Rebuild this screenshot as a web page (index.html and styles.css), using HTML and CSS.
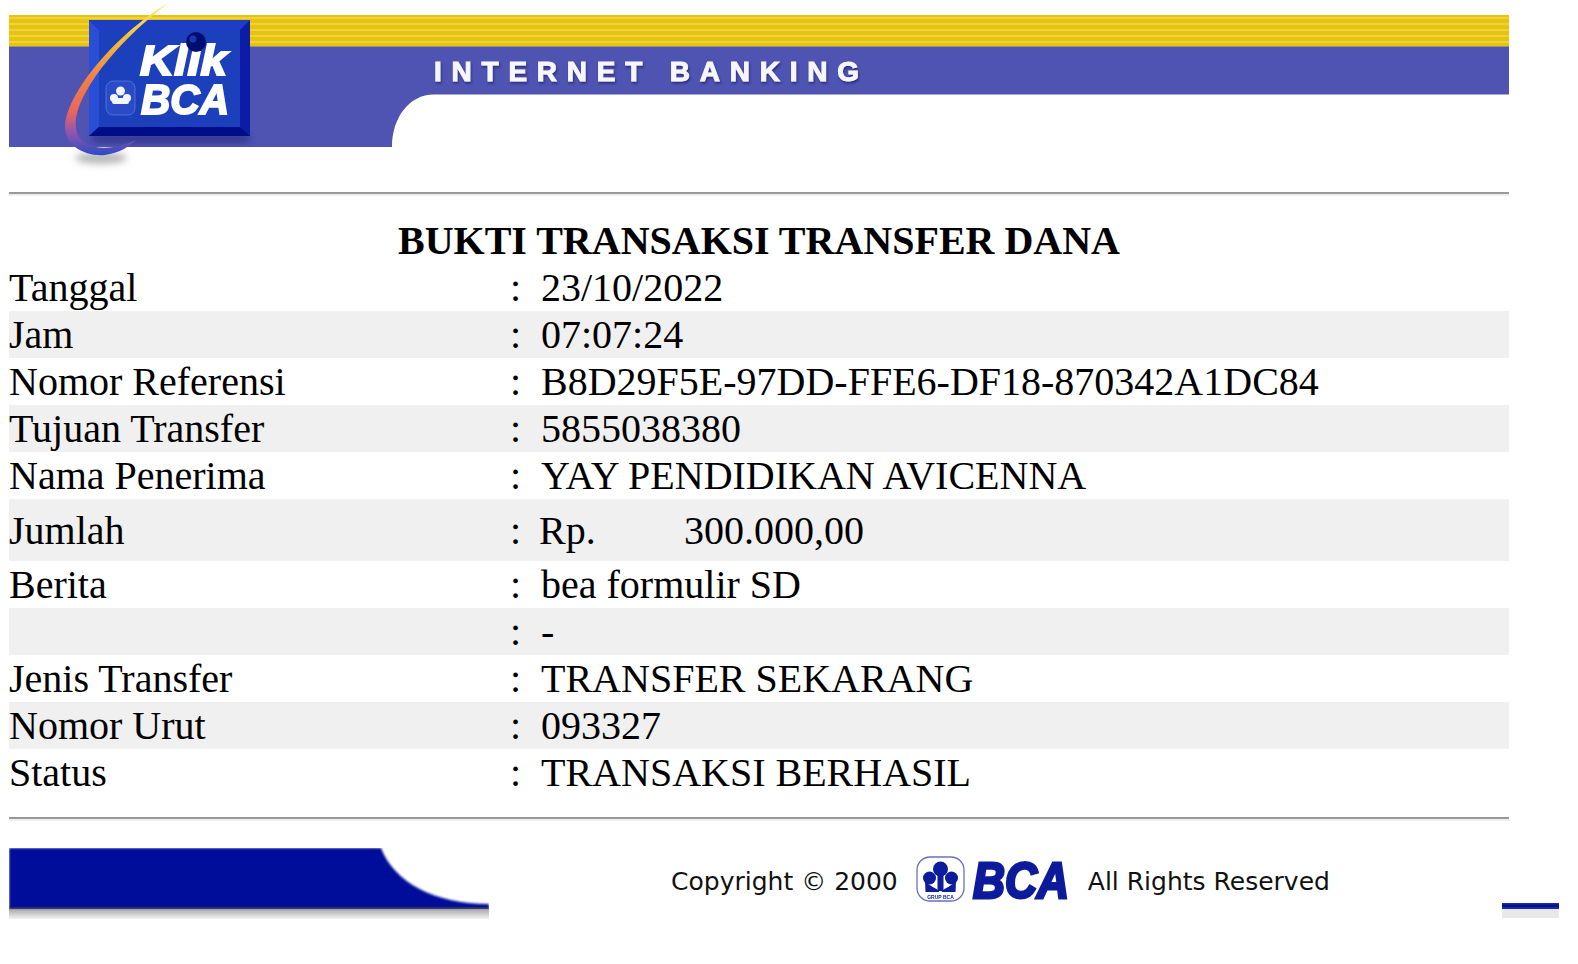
FILE: index.html
```html
<!DOCTYPE html>
<html lang="id">
<head>
<meta charset="utf-8">
<title>Bukti Transaksi Transfer Dana</title>
<link rel="stylesheet" href="styles.css">
</head>
<body>
<main class="page">
  <svg class="banner" viewBox="0 0 1500 170" width="1500" height="170" xmlns="http://www.w3.org/2000/svg" role="img" aria-label="KlikBCA Internet Banking">
    <defs>
      <linearGradient id="swoosh" x1="0" y1="0" x2="0" y2="1">
        <stop offset="0" stop-color="#f8f06a"/>
        <stop offset="0.22" stop-color="#f2c23c"/>
        <stop offset="0.5" stop-color="#f08048"/>
        <stop offset="0.72" stop-color="#e9665c"/>
        <stop offset="0.84" stop-color="#9a55ac"/>
        <stop offset="1" stop-color="#2c4cc4"/>
      </linearGradient>
      <filter id="soft" x="-5%" y="-5%" width="110%" height="110%"><feGaussianBlur stdDeviation="0.6"/></filter>
      <filter id="softer" x="-30%" y="-60%" width="160%" height="220%"><feGaussianBlur stdDeviation="3.5"/></filter>
      <filter id="tshadow" x="-5%" y="-20%" width="110%" height="150%"><feGaussianBlur in="SourceAlpha" stdDeviation="1.2" result="b"/><feOffset in="b" dx="1" dy="2" result="o"/><feFlood flood-color="#20246a" flood-opacity="0.75"/><feComposite in2="o" operator="in" result="s"/><feGaussianBlur in="SourceGraphic" stdDeviation="0.55" result="g"/><feMerge><feMergeNode in="s"/><feMergeNode in="g"/></feMerge></filter>
    </defs>
    <g filter="url(#soft)">
      <rect x="0" y="15" width="1500" height="32" fill="#e6c408"/>
      <g fill="#efd23c">
        <rect x="0" y="17" width="1500" height="2"/>
        <rect x="0" y="23" width="1500" height="2"/>
        <rect x="0" y="29" width="1500" height="2"/>
        <rect x="0" y="35" width="1500" height="2"/>
        <rect x="0" y="41" width="1500" height="2"/>
      </g>
      <rect x="0" y="46" width="1500" height="1" fill="#9c9470"/>
      <path d="M0 47H1500V94.500H425C400 94.500 383 118 383 147H0Z" fill="#4f53b2"/>
      <rect x="84" y="135" width="156" height="7" fill="#2e3088" filter="url(#softer)"/>
      <ellipse cx="92" cy="158" rx="26" ry="6" fill="#b8b8b8" filter="url(#softer)"/>
      <rect x="80" y="20" width="161" height="116" fill="#0a1fa6"/>
      <path d="M80 20H241L231 30H90Z" fill="#1b3cc4"/>
      <path d="M80 20L90 30V127L80 136Z" fill="#2b50d6"/>
      <path d="M80 136L90 127H231L241 136Z" fill="#010a86"/>
      <rect x="90" y="30" width="141" height="97" fill="#1c3fbc"/>
      <path d="M161 2C112 30 60 88 56 125C55 146 77 157 96 155C110 153 120 147 127 140C112 147 97 149 87 147C72 144 65 134 67 118C73 84 116 35 161 2Z" fill="url(#swoosh)"/>
      <text class="logo-word"><tspan x="131" y="75" textLength="87" lengthAdjust="spacingAndGlyphs">Klik</tspan><tspan x="132" y="114" textLength="88" lengthAdjust="spacingAndGlyphs">BCA</tspan></text>
      <circle cx="187" cy="42" r="10" fill="#060f70"/>
      <circle cx="184" cy="39" r="3.500" fill="#1f35b8"/>
      <rect x="97" y="81" width="29" height="34" rx="7" fill="#2a4cc8" stroke="#6f8ae0" stroke-width="0.6"/>
      <g fill="#f2f4ff">
        <circle cx="111.500" cy="91" r="4.500"/>
        <circle cx="105" cy="98" r="4"/>
        <circle cx="118" cy="98" r="4"/>
        <rect x="103" y="98" width="17" height="6" rx="2"/>
      </g>
    </g>
    <text class="banner-title" x="425" y="81" textLength="425" filter="url(#tshadow)">INTERNET BANKING</text>
  </svg>

  <div class="rule rule-top"></div>

  <h1 class="title">BUKTI TRANSAKSI TRANSFER DANA</h1>

  <dl class="rows">
    <div class="row"><dt>Tanggal</dt><dd class="colon">:</dd><dd class="value">23/10/2022</dd></div>
    <div class="row"><dt>Jam</dt><dd class="colon">:</dd><dd class="value">07:07:24</dd></div>
    <div class="row"><dt>Nomor Referensi</dt><dd class="colon">:</dd><dd class="value">B8D29F5E-97DD-FFE6-DF18-870342A1DC84</dd></div>
    <div class="row"><dt>Tujuan Transfer</dt><dd class="colon">:</dd><dd class="value">5855038380</dd></div>
    <div class="row"><dt>Nama Penerima</dt><dd class="colon">:</dd><dd class="value">YAY PENDIDIKAN AVICENNA</dd></div>
    <div class="row row-tall"><dt>Jumlah</dt><dd class="colon">:</dd><dd class="value amount"><span class="currency">Rp.</span><span>300.000,00</span></dd></div>
    <div class="row"><dt>Berita</dt><dd class="colon">:</dd><dd class="value">bea formulir SD</dd></div>
    <div class="row"><dt></dt><dd class="colon">:</dd><dd class="value">-</dd></div>
    <div class="row"><dt>Jenis Transfer</dt><dd class="colon">:</dd><dd class="value">TRANSFER SEKARANG</dd></div>
    <div class="row"><dt>Nomor Urut</dt><dd class="colon">:</dd><dd class="value">093327</dd></div>
    <div class="row"><dt>Status</dt><dd class="colon">:</dd><dd class="value">TRANSAKSI BERHASIL</dd></div>
  </dl>

  <div class="rule rule-bottom"></div>

  <footer class="footer">
    <svg class="foot-left" viewBox="0 0 480 71" width="480" height="71" xmlns="http://www.w3.org/2000/svg" aria-hidden="true">
      <defs>
        <linearGradient id="fshade" x1="0" y1="0" x2="0" y2="1">
          <stop offset="0" stop-color="#a0a0a0"/>
          <stop offset="1" stop-color="#f4f4f4"/>
        </linearGradient>
        <filter id="fsoft" x="-2%" y="-5%" width="104%" height="110%"><feGaussianBlur stdDeviation="0.9"/></filter>
      </defs>
      <rect x="0" y="60" width="480" height="11" fill="url(#fshade)"/>
      <path d="M0 0H372C385 34 425 56 480 56V60H0Z" fill="#03109a" filter="url(#fsoft)"/>
      <rect x="0" y="58.500" width="480" height="2" fill="#00044a" filter="url(#fsoft)"/>
    </svg>
    <div class="copy">
      <span>Copyright © 2000</span>
      <svg class="foot-logo" viewBox="0 0 154 52" width="154" height="52" xmlns="http://www.w3.org/2000/svg" role="img" aria-label="BCA">
        <defs><filter id="lsoft" x="-5%" y="-10%" width="110%" height="120%"><feGaussianBlur stdDeviation="0.5"/></filter></defs>
        <g filter="url(#lsoft)">
          <rect x="1" y="2" width="47" height="44" rx="13" fill="#fff" stroke="#6a72b8" stroke-width="1.300"/>
          <g fill="#0a1a9a">
            <circle cx="24.500" cy="14" r="7.500"/>
            <circle cx="13.500" cy="23" r="6.500"/>
            <circle cx="35.500" cy="23" r="6.500"/>
            <path d="M9 26C14 32 20 32 23.500 37H9.500Z"/>
            <path d="M40 26C35 32 29 32 25.500 37H39.500Z"/>
            <rect x="21.500" y="18" width="6" height="18"/>
          </g>
          <text class="foot-tiny" x="24.500" y="43.500" text-anchor="middle">GRUP BCA</text>
        </g>
        <text class="foot-word" x="57" y="42.500" textLength="96" lengthAdjust="spacingAndGlyphs" filter="url(#lsoft)">BCA</text>
      </svg>
      <span>All Rights Reserved</span>
    </div>
    <svg class="foot-right" viewBox="0 0 57 16" width="57" height="16" xmlns="http://www.w3.org/2000/svg" aria-hidden="true">
      <rect x="0" y="0" width="57" height="6" fill="#1a2aa8"/>
      <rect x="0" y="1.500" width="57" height="2.500" fill="#06108a"/>
      <rect x="0" y="6" width="57" height="9" fill="#e8e8e8"/>
    </svg>
  </footer>
</main>
</body>
</html>
```

FILE: styles.css
```css
* {
  box-sizing: border-box;
}

html,
body {
  margin: 0;
  padding: 0;
  background: #fff;
}

body {
  color: #000;
  font-family: "Liberation Serif", "Times New Roman", serif;
  overflow-x: hidden;
}

.page {
  width: 1500px;
  margin-left: 9px;
}

.banner {
  display: block;
  overflow: visible;
}

.logo-word {
  font-family: "Liberation Sans", Arial, sans-serif;
  font-style: italic;
  font-weight: 700;
  font-size: 42px;
  fill: #fff;
  stroke: #fff;
  stroke-width: 2px;
}

.banner-title {
  font-family: "Liberation Sans", Arial, sans-serif;
  font-weight: 700;
  font-size: 28px;
  fill: #f6f6fc;
  stroke: #f6f6fc;
  stroke-width: 1px;
}

.rule {
  height: 4px;
  border-top: 2px solid #999;
  border-bottom: 2px solid #efefef;
}

.rule-top {
  margin-top: 22px;
}

.rule-bottom {
  margin-top: 21px;
}

.title {
  margin: 22px 0 0;
  height: 46px;
  line-height: 46px;
  text-align: center;
  font-size: 40px;
  font-weight: 700;
}

.rows {
  margin: 0;
  font-size: 40px;
}

.row {
  display: grid;
  grid-template-columns: 501px 31px 1fr;
  height: 47px;
  line-height: 47px;
}

.row:nth-child(even) {
  background: #f0f0f0;
}

.row-tall {
  height: 62px;
  line-height: 63px;
}

.row dt,
.row dd {
  margin: 0;
}

.row .amount {
  display: flex;
  margin-left: -2px;
}

.currency {
  width: 145px;
}

.footer {
  display: flex;
  align-items: flex-start;
  width: 1550px;
  height: 71px;
  margin-top: 27px;
}

.foot-left,
.foot-right {
  display: block;
  flex: none;
}

.foot-right {
  margin-top: 55px;
}

.copy {
  flex: 1;
  display: flex;
  justify-content: center;
  align-items: center;
  gap: 18px;
  height: 66px;
  padding-left: 10px;
  font-family: "DejaVu Sans", Verdana, sans-serif;
  font-size: 25px;
  color: #111;
}

.foot-logo {
  display: block;
  flex: none;
  overflow: visible;
}

.foot-word {
  font-family: "Liberation Sans", Arial, sans-serif;
  font-style: italic;
  font-weight: 700;
  font-size: 50px;
  fill: #0a1a9a;
  stroke: #0a1a9a;
  stroke-width: 3px;
}

.foot-tiny {
  font-family: "Liberation Sans", Arial, sans-serif;
  font-weight: 700;
  font-size: 5px;
  fill: #0a1a9a;
}
```
